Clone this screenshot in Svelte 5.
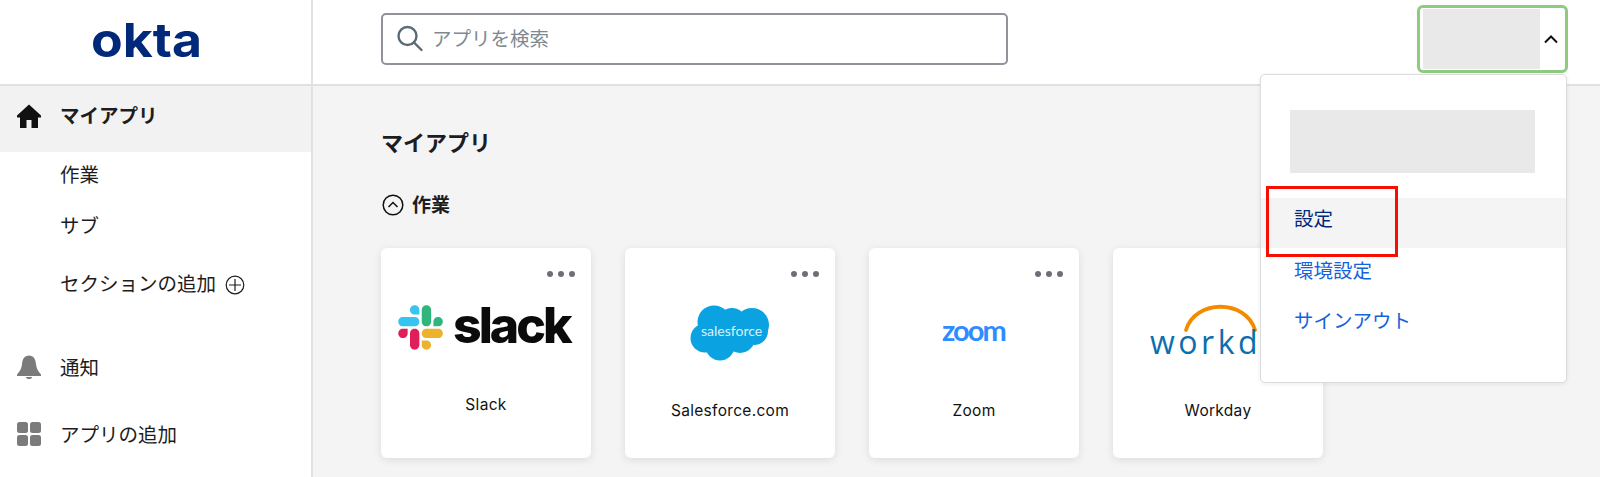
<script lang="ts">
	const SUB_ITEMS = ['作業', 'サブ'];
	const CARDS = [
		{ name: 'Slack', logo: 'slack' },
		{ name: 'Salesforce.com', logo: 'salesforce' },
		{ name: 'Zoom', logo: 'zoom' },
		{ name: 'Workday', logo: 'workday' }
	];
</script>

<div class="page">
	<div class="brand">
		<svg width="120" height="60" viewBox="0 0 120 60" aria-label="okta">
			<text x="5" y="47" textLength="111" lengthAdjust="spacingAndGlyphs" class="okta-text">okta</text>
		</svg>
	</div>

	<header class="topbar">
		<div class="search">
			<svg width="30" height="30" viewBox="0 0 30 30" fill="none" stroke="#5b6b75" stroke-width="2.4" stroke-linecap="round">
				<circle cx="12.5" cy="12" r="9" />
				<path d="M19.5 19l7 7" />
			</svg>
			<span>アプリを検索</span>
		</div>
		<div class="user">
			<div class="user-name"></div>
			<svg width="16" height="10" viewBox="0 0 16 10" fill="none" stroke="#111" stroke-width="2">
				<path d="M2 8.500l6-6 6 6" />
			</svg>
		</div>
	</header>

	<nav class="sidebar">
		<div class="nav-row active">
			<svg width="24" height="24" viewBox="0 0 24 24" fill="#111">
				<path d="M12 0.500L24 11.500V13.500H21V24H14.500V16H9.500V24H3V13.500H0V11.500Z" />
			</svg>
			<span>マイアプリ</span>
		</div>
		{#each SUB_ITEMS as item}
			<div class="nav-row sub">{item}</div>
		{/each}
		<div class="nav-row sub add">
			<span>セクションの追加</span>
			<svg width="20" height="20" viewBox="0 0 20 20" fill="none" stroke="#1d1d21" stroke-width="1.200">
				<circle cx="10" cy="10" r="8.800" />
				<path d="M10 4v12M4 10h12" />
			</svg>
		</div>
		<div class="nav-row notify">
			<svg width="24" height="24" viewBox="0 0 24 24" fill="#7b7b7b">
				<path d="M12 0.500C16.500 0.500 18.500 4 19 9C19.400 13.500 21 16 24 19.500V21H0V19.500C3 16 4.600 13.500 5 9C5.500 4 7.500 0.500 12 0.500Z" />
				<path d="M9 22H15C15 23.500 13.500 24 12 24C10.500 24 9 23.500 9 22Z" />
			</svg>
			<span>通知</span>
		</div>
		<div class="nav-row apps">
			<svg width="24" height="24" viewBox="0 0 24 24" fill="#7b7b7b">
				<rect width="11" height="11" rx="2.500" />
				<rect x="13" width="11" height="11" rx="2.500" />
				<rect y="13" width="11" height="11" rx="2.500" />
				<rect x="13" y="13" width="11" height="11" rx="2.500" />
			</svg>
			<span>アプリの追加</span>
		</div>
	</nav>

	<main class="content">
		<h1>マイアプリ</h1>
		<div class="section-head">
			<svg width="22" height="22" viewBox="0 0 22 22" fill="none" stroke="#111" stroke-width="1.500">
				<circle cx="11" cy="11" r="9.800" />
				<path d="M6.500 13l4.500-4.500 4.500 4.500" />
			</svg>
			<span>作業</span>
		</div>
		<div class="cards">
			{#each CARDS as card}
				<article class="card">
					<div class="dots"><i></i><i></i><i></i></div>
					<div class="logo">
						{#if card.logo === 'slack'}
							<svg width="200" height="70" viewBox="0 0 200 70">
								<g transform="translate(12 13) scale(0.355)">
									<path fill="#e01e5a" d="M27.200 80c0 7.300-5.900 13.200-13.200 13.200C6.700 93.200.8 87.300.8 80c0-7.300 5.900-13.200 13.200-13.200h13.200V80zm6.600 0c0-7.300 5.900-13.200 13.200-13.200 7.300 0 13.200 5.900 13.200 13.200v33c0 7.300-5.900 13.200-13.200 13.200-7.300 0-13.200-5.900-13.200-13.200V80z" />
									<path fill="#36c5f0" d="M47 27c-7.300 0-13.200-5.900-13.200-13.200C33.800 6.500 39.700.6 47 .6c7.300 0 13.200 5.900 13.200 13.200V27H47zm0 6.700c7.300 0 13.200 5.900 13.200 13.200 0 7.300-5.900 13.200-13.200 13.200H13.900C6.600 60.100.7 54.200.7 46.900c0-7.300 5.900-13.200 13.200-13.200H47z" />
									<path fill="#2eb67d" d="M99.900 46.900c0-7.300 5.900-13.200 13.200-13.200 7.300 0 13.200 5.900 13.200 13.200 0 7.300-5.900 13.200-13.200 13.200H99.900V46.900zm-6.600 0c0 7.300-5.900 13.200-13.200 13.200-7.300 0-13.200-5.900-13.200-13.200V13.800C66.900 6.500 72.800.6 80.100.6c7.300 0 13.200 5.900 13.200 13.200v33.100z" />
									<path fill="#ecb22e" d="M80.100 99.800c7.300 0 13.200 5.900 13.200 13.200 0 7.300-5.900 13.200-13.200 13.200-7.300 0-13.200-5.900-13.200-13.200V99.800h13.200zm0-6.600c-7.300 0-13.200-5.900-13.200-13.200 0-7.300 5.900-13.200 13.200-13.200h33.100c7.300 0 13.200 5.900 13.200 13.200 0 7.300-5.900 13.200-13.200 13.200H80.100z" />
								</g>
								<text x="67" y="51" class="slack-text">slack</text>
							</svg>
						{:else if card.logo === 'salesforce'}
							<svg class="lowered" width="80" height="56" viewBox="0 0 80 56" fill="#0ba2e2">
								<circle cx="24" cy="17" r="16.500" />
								<circle cx="42" cy="17" r="14" />
								<circle cx="62" cy="20" r="17" />
								<circle cx="15" cy="33" r="14.500" />
								<circle cx="30" cy="41" r="14.500" />
								<circle cx="50" cy="33" r="15" />
								<circle cx="64" cy="26" r="14" />
								<text x="11" y="31" class="sf-text">salesforce</text>
							</svg>
						{:else if card.logo === 'zoom'}
							<svg class="lowered" width="90" height="44" viewBox="0 0 90 44">
								<text x="13" y="30" class="zoom-text">zoom</text>
							</svg>
						{:else}
							<svg width="200" height="72" viewBox="0 0 200 72">
								<path d="M68 39C77 8 128 8 137 39" fill="none" stroke="#f38b00" stroke-width="3.800" stroke-linecap="round" />
								<text x="32" y="63" class="workday-text">workday</text>
							</svg>
						{/if}
					</div>
					<div class="label" class:raised={card.logo === 'slack'}>{card.name}</div>
				</article>
			{/each}
		</div>
	</main>

	<div class="menu">
		<div class="menu-name"></div>
		<div class="menu-item current">設定</div>
		<div class="menu-item">環境設定</div>
		<div class="menu-item">サインアウト</div>
		<div class="callout"></div>
	</div>
</div>

<style>
	:global(body) {
		margin: 0;
		background: #fff;
	}

	.page {
		position: relative;
		display: grid;
		grid-template-columns: 313px 1fr;
		grid-template-rows: 86px 391px;
		height: 477px;
		overflow: hidden;
		color: #1d1d21;
		font-family: 'Noto Sans CJK JP', Inter, sans-serif;
		font-size: 19.500px;
	}

	.brand {
		display: flex;
		align-items: center;
		justify-content: center;
		padding: 0 19px 4px 0;
		border-right: 2px solid #e1e1e1;
		border-bottom: 2px solid #e1e1e1;
		box-sizing: border-box;
	}

	.okta-text {
		font-family: Inter, sans-serif;
		font-weight: 700;
		font-size: 47px;
		fill: #00297a;
	}

	.topbar {
		display: flex;
		align-items: center;
		justify-content: space-between;
		box-sizing: border-box;
		padding: 0 32px 6px 68px;
		border-bottom: 2px solid #e1e1e1;
	}

	.search {
		display: flex;
		align-items: center;
		gap: 7px;
		box-sizing: border-box;
		width: 627px;
		height: 52px;
		padding-left: 12px;
		border: 2px solid #92929a;
		border-radius: 5px;
		color: #7f8a90;
	}

	.search span {
		margin-top: -3px;
	}

	.user {
		display: flex;
		align-items: center;
		box-sizing: border-box;
		width: 151px;
		height: 68px;
		padding: 3px 3px;
		border: 3px solid #8fcb7f;
		border-radius: 6px;
	}

	.user-name {
		width: 117px;
		height: 60px;
		margin-right: 3px;
		background: #e9e9e9;
	}

	.sidebar {
		display: flex;
		flex-direction: column;
		box-sizing: border-box;
		border-right: 2px solid #e1e1e1;
	}

	.nav-row {
		display: flex;
		align-items: center;
		gap: 19px;
		box-sizing: border-box;
		height: 44px;
		padding-left: 17px;
		line-height: 1;
	}

	.active {
		height: 66px;
		padding-bottom: 6px;
		font-weight: 700;
		background: #f2f2f2;
	}

	.active span {
		margin-top: -2px;
	}

	.sub {
		padding-left: 60px;
	}

	.sub + .sub {
		margin-top: 7px;
	}

	.add {
		gap: 9px;
		margin-top: 14px !important;
	}

	.add svg {
		margin-top: 3px;
	}

	.notify {
		margin-top: 40px;
	}

	.apps {
		margin-top: 23px;
	}

	.content {
		box-sizing: border-box;
		padding-left: 68px;
		background: #f4f4f4;
	}

	h1 {
		margin: 41px 0 0;
		font-size: 22px;
		line-height: 28px;
		font-weight: 700;
	}

	.section-head {
		display: flex;
		align-items: center;
		gap: 8px;
		height: 24px;
		margin: 38px 0 0 1px;
		font-size: 19px;
		font-weight: 700;
	}

	.section-head span {
		margin-top: -3px;
	}

	.cards {
		display: flex;
		gap: 34px;
		margin-top: 31px;
	}

	.card {
		width: 210px;
		height: 210px;
		box-sizing: border-box;
		padding-top: 23px;
		background: #fff;
		border-radius: 6px;
		box-shadow: 0 2px 8px rgba(0, 0, 0, 0.1);
	}

	.dots {
		display: flex;
		justify-content: flex-end;
		gap: 5px;
		height: 6px;
		padding-right: 16px;
	}

	.dots i {
		width: 6px;
		height: 6px;
		border-radius: 50%;
		background: #6e6e78;
	}

	.logo {
		display: flex;
		align-items: center;
		justify-content: center;
		height: 80px;
		margin-top: 10px;
	}

	.lowered {
		margin-top: 12px;
	}

	.slack-text {
		font-family: Inter, sans-serif;
		font-weight: 800;
		font-size: 50px;
		letter-spacing: -3px;
		fill: #0b0b0b;
	}

	.sf-text {
		font-family: Lato, sans-serif;
		font-size: 14px;
		fill: #d9f1fb;
	}

	.zoom-text {
		font-family: Lato, sans-serif;
		font-weight: 700;
		font-size: 29px;
		letter-spacing: -2px;
		fill: #2d8cff;
	}

	.workday-text {
		font-family: 'Open Sans', sans-serif;
		font-size: 32px;
		letter-spacing: 3.500px;
		fill: #0a6fae;
	}

	.label {
		margin-top: 33px;
		font-family: Inter, sans-serif;
		font-size: 15.500px;
		line-height: 22px;
		letter-spacing: 0.300px;
		text-align: center;
		color: #111;
	}

	.raised {
		margin-top: 27px;
	}

	.menu {
		position: absolute;
		top: 74px;
		left: 1260px;
		box-sizing: border-box;
		width: 307px;
		height: 309px;
		padding-top: 35px;
		background: #fff;
		border: 1.500px solid #dcdce0;
		border-radius: 5px;
		box-shadow: 0 1px 4px rgba(0, 0, 0, 0.08);
	}

	.menu-name {
		height: 63px;
		margin: 0 31px 0 29px;
		background: #e9e9e9;
	}

	.menu-item {
		display: flex;
		align-items: center;
		box-sizing: border-box;
		height: 50px;
		padding: 0 0 8px 33px;
		color: #1662dd;
	}

	.current {
		margin-top: 25px;
		padding-bottom: 12px;
		background: #f4f4f4;
		color: #00297a;
	}

	.callout {
		position: absolute;
		top: 111px;
		left: 5px;
		box-sizing: border-box;
		width: 132px;
		height: 71px;
		border: 3.500px solid #f80e00;
	}
</style>
